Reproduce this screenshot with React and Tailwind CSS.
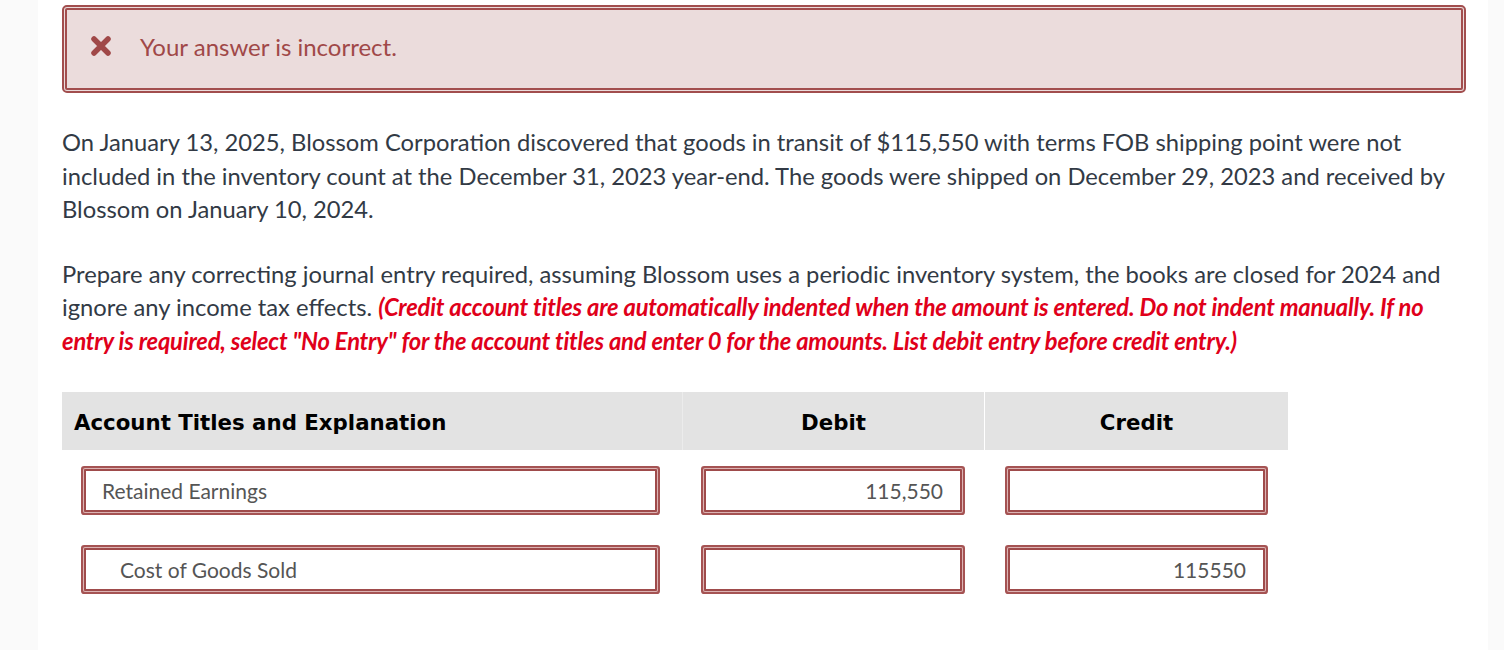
const lato = "font-['Lato','Open_Sans',sans-serif]";

function Field({ value = "", indent = false, right = false }) {
  return (
    <div
      className={`h-[43px] bg-white border-2 border-[#9f4b4b] shadow-[0_0_0_1px_#dcb4b4,0_0_0_3px_#a55353] rounded-[1px] flex items-center text-[21px] text-[#555] ${
        right ? "justify-end pr-[17px]" : indent ? "pl-[34px]" : "pl-4"
      }`}
    >
      {value}
    </div>
  );
}

export default function App() {
  const rows = [
    { account: "Retained Earnings", indent: false, debit: "115,550", credit: "" },
    { account: "Cost of Goods Sold", indent: true, debit: "", credit: "115550" },
  ];

  return (
    <div className={`flex min-h-[650px] bg-[#fafafa] ${lato}`}>
      <div className="w-[38px] shrink-0" />
      <main className="w-[1450px] shrink-0 bg-white pl-6 pr-[22px] pt-[5px]">
        {/* result banner */}
        <div className="h-[88px] rounded-[5px] border-[5px] border-double border-[#a24e4e] bg-[#ebdcdc] flex items-center pl-[23px]">
          <svg width="22" height="22" viewBox="0 0 22 22" className="mt-[-6px]">
            <path d="M4 4 L18 18 M18 4 L4 18" stroke="#a04848" strokeWidth="5.5" strokeLinecap="round" />
          </svg>
          <span className="ml-[28px] mt-[-4px] text-[24px] text-[#a04848]">Your answer is incorrect.</span>
        </div>

        <p className="mt-[33px] text-[23.75px] leading-[33.5px] text-[#323a45]">
          On January 13, 2025, Blossom Corporation discovered that goods in transit of $115,550 with terms FOB shipping point were not
          included in the inventory count at the December 31, 2023 year-end. The goods were shipped on December 29, 2023 and received by
          Blossom on January 10, 2024.
        </p>

        <p className="mt-[31px] text-[23.75px] leading-[33.5px] text-[#323a45]">
          Prepare any correcting journal entry required, assuming Blossom uses a periodic inventory system, the books are closed for 2024 and
          ignore any income tax effects.{" "}
          <span className="font-bold italic text-[#e0001a] tracking-[-0.008em]">
            (Credit account titles are automatically indented when the amount is entered. Do not indent manually. If no entry is
            required, select "No Entry" for the account titles and enter 0 for the amounts. List debit entry before credit entry.)
          </span>
        </p>

        {/* journal table */}
        <div className="mt-[34px] w-[1226px]">
          <div className="grid grid-cols-[620px_302px_304px] h-[58px] bg-[#e3e3e3] font-['DejaVu_Sans',sans-serif] font-bold text-[21.3px] text-black">
            <div className="flex items-center pl-3 pt-1">Account Titles and Explanation</div>
            <div className="flex items-center justify-center pt-1 border-l border-[#ececec]">Debit</div>
            <div className="flex items-center justify-center pt-1 border-l border-white">Credit</div>
          </div>

          {rows.map((r, i) => (
            <div key={i} className={`grid grid-cols-[620px_302px_304px] ${i === 0 ? "mt-[19px]" : "mt-[36px]"}`}>
              <div className="pl-[22px] pr-[25px]">
                <Field value={r.account} indent={r.indent} />
              </div>
              <div className="pl-[22px] pr-[22px]">
                <Field value={r.debit} right />
              </div>
              <div className="pl-[24px] pr-[23px]">
                <Field value={r.credit} right />
              </div>
            </div>
          ))}
        </div>
      </main>
    </div>
  );
}
